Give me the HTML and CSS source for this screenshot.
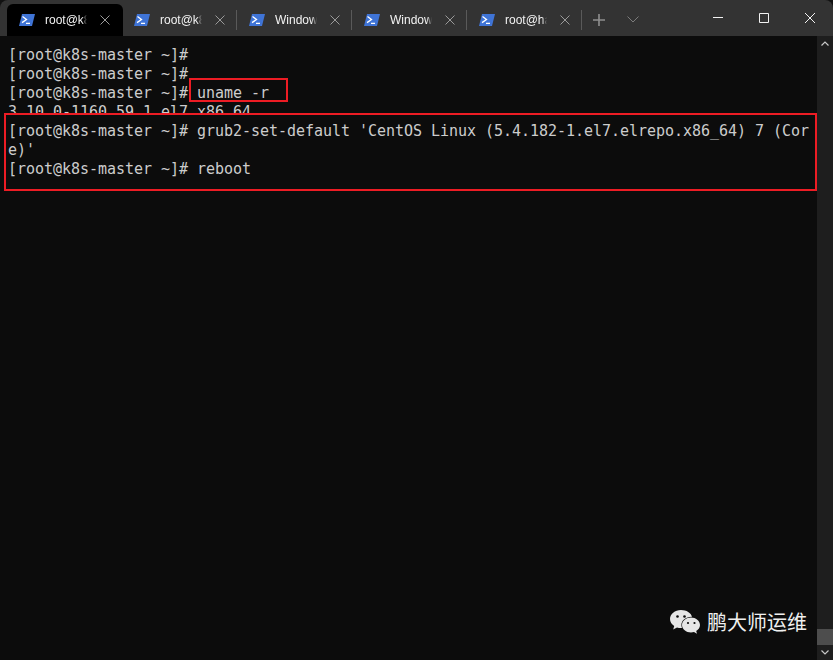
FILE: index.html
```html
<!DOCTYPE html>
<html lang="en">
<head>
<meta charset="utf-8">
<title>Terminal</title>
<link rel="stylesheet" href="styles.css">
</head>
<body>
<div class="window">
  <header class="titlebar">
    <div class="tabs">
      <div class="tab active">
        <svg class="ps" viewBox="0 0 16 12"><path d="M3 0H16L13 12H0Z" fill="#3f74d6"/><path d="M3.500 2.500L7.500 5.500L3 8.600M7 9.300H11" fill="none" stroke="#fff" stroke-width="1.300"/></svg>
        <span class="tab-title">root@k8s-master</span>
        <svg class="x" viewBox="0 0 10 10"><path d="M0.5 0.5L9.5 9.5M9.5 0.5L0.5 9.5"/></svg>
      </div>
      <div class="tab">
        <svg class="ps" viewBox="0 0 16 12"><path d="M3 0H16L13 12H0Z" fill="#3f74d6"/><path d="M3.500 2.500L7.500 5.500L3 8.600M7 9.300H11" fill="none" stroke="#fff" stroke-width="1.300"/></svg>
        <span class="tab-title">root@k8s-node</span>
        <svg class="x" viewBox="0 0 10 10"><path d="M0.5 0.5L9.5 9.5M9.5 0.5L0.5 9.5"/></svg>
      </div>
      <i class="sep"></i>
      <div class="tab">
        <svg class="ps" viewBox="0 0 16 12"><path d="M3 0H16L13 12H0Z" fill="#3f74d6"/><path d="M3.500 2.500L7.500 5.500L3 8.600M7 9.300H11" fill="none" stroke="#fff" stroke-width="1.300"/></svg>
        <span class="tab-title">Windows PowerShell</span>
        <svg class="x" viewBox="0 0 10 10"><path d="M0.5 0.5L9.5 9.5M9.5 0.5L0.5 9.5"/></svg>
      </div>
      <i class="sep"></i>
      <div class="tab">
        <svg class="ps" viewBox="0 0 16 12"><path d="M3 0H16L13 12H0Z" fill="#3f74d6"/><path d="M3.500 2.500L7.500 5.500L3 8.600M7 9.300H11" fill="none" stroke="#fff" stroke-width="1.300"/></svg>
        <span class="tab-title">Windows PowerShell</span>
        <svg class="x" viewBox="0 0 10 10"><path d="M0.5 0.5L9.5 9.5M9.5 0.5L0.5 9.5"/></svg>
      </div>
      <i class="sep"></i>
      <div class="tab">
        <svg class="ps" viewBox="0 0 16 12"><path d="M3 0H16L13 12H0Z" fill="#3f74d6"/><path d="M3.500 2.500L7.500 5.500L3 8.600M7 9.300H11" fill="none" stroke="#fff" stroke-width="1.300"/></svg>
        <span class="tab-title">root@harbor</span>
        <svg class="x" viewBox="0 0 10 10"><path d="M0.5 0.5L9.5 9.5M9.5 0.5L0.5 9.5"/></svg>
      </div>
      <i class="sep"></i>
      <svg class="plus" viewBox="0 0 12 12"><path d="M6 0V12M0 6H12"/></svg>
      <svg class="chev" viewBox="0 0 12 7"><path d="M0.5 0.5L6 6L11.5 0.5"/></svg>
    </div>
    <div class="controls">
      <svg class="ctl" viewBox="0 0 46 36"><path d="M18 17.5H28"/></svg>
      <svg class="ctl" viewBox="0 0 46 36"><path d="M18.5 13.5H27.5V22.5H18.5Z"/></svg>
      <svg class="ctl" viewBox="0 0 46 36"><path d="M18 13L28 23M28 13L18 23"/></svg>
    </div>
  </header>
  <main class="body">
    <pre class="term"><span class="ln">[root@k8s-master ~]#</span>
<span class="ln">[root@k8s-master ~]#</span>
<span class="ln">[root@k8s-master ~]# uname -r</span>
<span class="ln cut">3.10.0-1160.59.1.el7.x86_64</span>
<span class="ln">[root@k8s-master ~]# grub2-set-default 'CentOS Linux (5.4.182-1.el7.elrepo.x86_64) 7 (Cor</span>
<span class="ln">e)'</span>
<span class="ln">[root@k8s-master ~]# reboot</span></pre>
    <aside class="scrollbar">
      <svg class="sb-arrow" viewBox="0 0 8 5"><path d="M0.5 4.5L4 1L7.5 4.5"/></svg>
      <div class="sb-track"><div class="sb-thumb"></div></div>
      <svg class="sb-arrow" viewBox="0 0 8 5"><path d="M0.5 0.5L4 4L7.5 0.5"/></svg>
    </aside>
    <div class="mark mark-a"></div>
    <div class="mark mark-b"></div>
    <div class="watermark">
      <svg class="wechat" viewBox="0 0 32 26">
        <path d="M12 1C5.900 1 1 5 1 10c0 2.900 1.600 5.300 4.200 7l-1 3.400 3.800-2c1.300.4 2.600.6 4 .6l1 0c-.4-1-.6-1.900-.6-2.900 0-4.700 4.500-8.300 10-8.300l.7 0C22 3.900 17.500 1 12 1Z" fill="#e6e6e6"/>
        <path d="M31 16c0-4.200-4.200-7.500-9-7.500s-9 3.300-9 7.500 4.200 7.500 9 7.500c1 0 2-.1 3-.4l3 1.700-.8-2.800c2.300-1.400 3.800-3.500 3.800-6Z" fill="#e6e6e6"/>
        <circle cx="8.500" cy="7.500" r="1.300" fill="#0c0c0c"/><circle cx="15.500" cy="7.500" r="1.300" fill="#0c0c0c"/>
        <circle cx="19" cy="14" r="1.100" fill="#0c0c0c"/><circle cx="25.500" cy="14" r="1.100" fill="#0c0c0c"/>
      </svg>
      <span>鹏大师运维</span>
    </div>
  </main>
</div>
</body>
</html>
```
FILE: styles.css
```css
* { box-sizing: border-box; }
html, body { margin: 0; height: 100%; background: #111; overflow: hidden; }
.window { width: 833px; height: 660px; display: flex; flex-direction: column; border-radius: 8px 8px 0 0; overflow: hidden; }
.titlebar { height: 36px; flex: none; background: #333333; display: flex; justify-content: space-between; }
.tabs { display: flex; align-items: flex-end; padding-left: 7px; }
.tab { width: 115px; height: 32px; padding: 0 0 0 12px; display: flex; align-items: center; border-radius: 6px 6px 0 0; color: #f2f2f2; }
.tab.active { background: #000; width: 116px; margin-right: -1px; }
.ps { width: 16px; height: 12px; flex: none; }
.tab-title { width: 42px; margin-left: 10px; overflow: hidden; white-space: nowrap; font: 12px/16px "Liberation Sans", sans-serif; -webkit-mask-image: linear-gradient(to right, #000 88%, transparent); mask-image: linear-gradient(to right, #000 88%, transparent); }
.x { width: 10px; height: 10px; margin-left: 13px; flex: none; fill: none; stroke: #9a9a9a; stroke-width: 1; }
.sep { width: 1px; height: 20px; background: #5a5a5a; margin: 0 0 6px -1px; flex: none; }
.plus { width: 12px; height: 12px; margin: 0 0 10px 11px; fill: none; stroke: #8f8f8f; stroke-width: 1.600; }
.chev { width: 12px; height: 7px; margin: 0 0 13px 22px; fill: none; stroke: #7c7c7c; stroke-width: 1; }
.controls { display: flex; }
.ctl { width: 46px; height: 36px; fill: none; stroke: #f2f2f2; stroke-width: 1; }
.body { flex: 1; position: relative; display: flex; min-height: 0; background: #0c0c0c; }
.term { flex: 1; margin: 0; padding: 10px 0 0 8px; color: #cccccc; font: 15px/19px "DejaVu Sans Mono", monospace; letter-spacing: -0.03px; }
.ln { display: inline-block; height: 19px; vertical-align: top; }
.ln.cut { height: 12px; overflow: hidden; }
.scrollbar { width: 16px; flex: none; background: #1e1e1e; display: flex; flex-direction: column; align-items: center; }
.sb-arrow { width: 8px; height: 5px; margin: 5px 0; flex: none; fill: none; stroke: #c8c8c8; stroke-width: 1.200; }
.sb-track { flex: 1; display: flex; flex-direction: column; justify-content: flex-end; width: 100%; }
.sb-thumb { height: 16px; background: #4d4d4d; }
.mark { position: absolute; border: 2px solid #ed1c24; }
.mark-a { left: 189px; top: 42px; width: 99px; height: 24px; }
.mark-b { left: 4px; top: 77px; width: 813px; height: 78px; }
.watermark { position: absolute; left: 669px; top: 572px; display: flex; align-items: center; gap: 6px; color: #f0f0f0; font: 20px/28px "Noto Sans CJK SC", sans-serif; }
.wechat { width: 32px; height: 26px; }
```
